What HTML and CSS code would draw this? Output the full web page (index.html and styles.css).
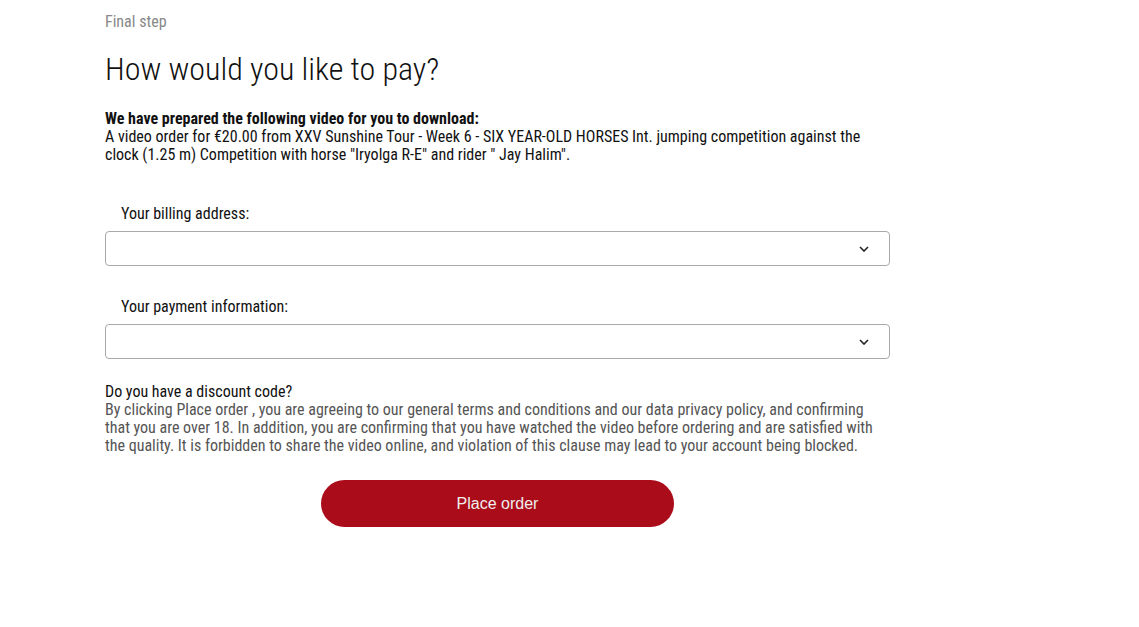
FILE: index.html
```html
<!DOCTYPE html>
<html lang="en">
<head>
<meta charset="utf-8">
<title>Final step</title>
<link rel="stylesheet" href="styles.css">
</head>
<body>
<main class="page">
  <p class="step">Final step</p>
  <h1 class="title">How would you like to pay?</h1>
  <div class="summary">
    <strong>We have prepared the following video for you to download:</strong><br>
    A video order for €20.00 from XXV Sunshine Tour - Week 6 - SIX YEAR-OLD HORSES Int. jumping competition against the clock (1.25 m) Competition with horse "Iryolga R-E" and rider " Jay Halim".
  </div>
  <div class="field">
    <label class="label">Your billing address:</label>
    <div class="select">
      <svg class="chev" width="10" height="6" viewBox="0 0 10 6"><path d="M1 1l4 4 4-4" fill="none" stroke="#222" stroke-width="1.6"/></svg>
    </div>
  </div>
  <div class="field">
    <label class="label">Your payment information:</label>
    <div class="select">
      <svg class="chev" width="10" height="6" viewBox="0 0 10 6"><path d="M1 1l4 4 4-4" fill="none" stroke="#222" stroke-width="1.6"/></svg>
    </div>
  </div>
  <div class="terms">
    <p class="discount">Do you have a discount code?</p>
    <p class="legal">By clicking Place order , you are agreeing to our general terms and conditions and our data privacy policy, and confirming that you are over 18. In addition, you are confirming that you have watched the video before ordering and are satisfied with the quality. It is forbidden to share the video online, and violation of this clause may lead to your account being blocked.</p>
  </div>
  <div class="actions">
    <button class="order">Place order</button>
  </div>
</main>
</body>
</html>
```
FILE: styles.css
```css
html, body { margin: 0; padding: 0; background: #fff; }
body {
  font-family: Roboto, "Liberation Sans", sans-serif;
  font-stretch: condensed;
  color: #111;
}
.page {
  width: 785px;
  margin-left: 105px;
  padding-top: 13px;
}
.step {
  margin: 0;
  font-size: 16px;
  line-height: 18px;
  color: #888;
}
.title {
  margin: 19px 0 0;
  font-size: 32px;
  line-height: 38px;
  font-weight: 300;
  color: #111;
}
.summary {
  margin-top: 22px;
  font-size: 16px;
  line-height: 18px;
  color: #111;
}
.summary strong { font-weight: 700; }
.field { margin-top: 41px; }
.field + .field { margin-top: 32px; }
.label {
  display: block;
  padding-left: 16px;
  font-size: 16px;
  line-height: 18px;
  color: #111;
}
.select {
  margin-top: 8px;
  height: 33px;
  border: 1px solid #a9a9a9;
  border-radius: 4px;
  display: flex;
  align-items: center;
  justify-content: flex-end;
  padding-right: 20px;
}
.terms { margin-top: 24px; }
.discount {
  margin: 0;
  font-size: 16px;
  line-height: 18px;
  color: #111;
}
.legal {
  margin: 0;
  font-size: 16px;
  line-height: 18px;
  color: #555;
}
.actions {
  margin-top: 25px;
  display: flex;
  justify-content: center;
}
.order {
  width: 353px;
  height: 47px;
  border: none;
  border-radius: 24px;
  background: #ab0c1a;
  color: #eee;
  font-family: "Liberation Sans", Arial, sans-serif;
  font-stretch: normal;
  font-size: 16px;
}
```
